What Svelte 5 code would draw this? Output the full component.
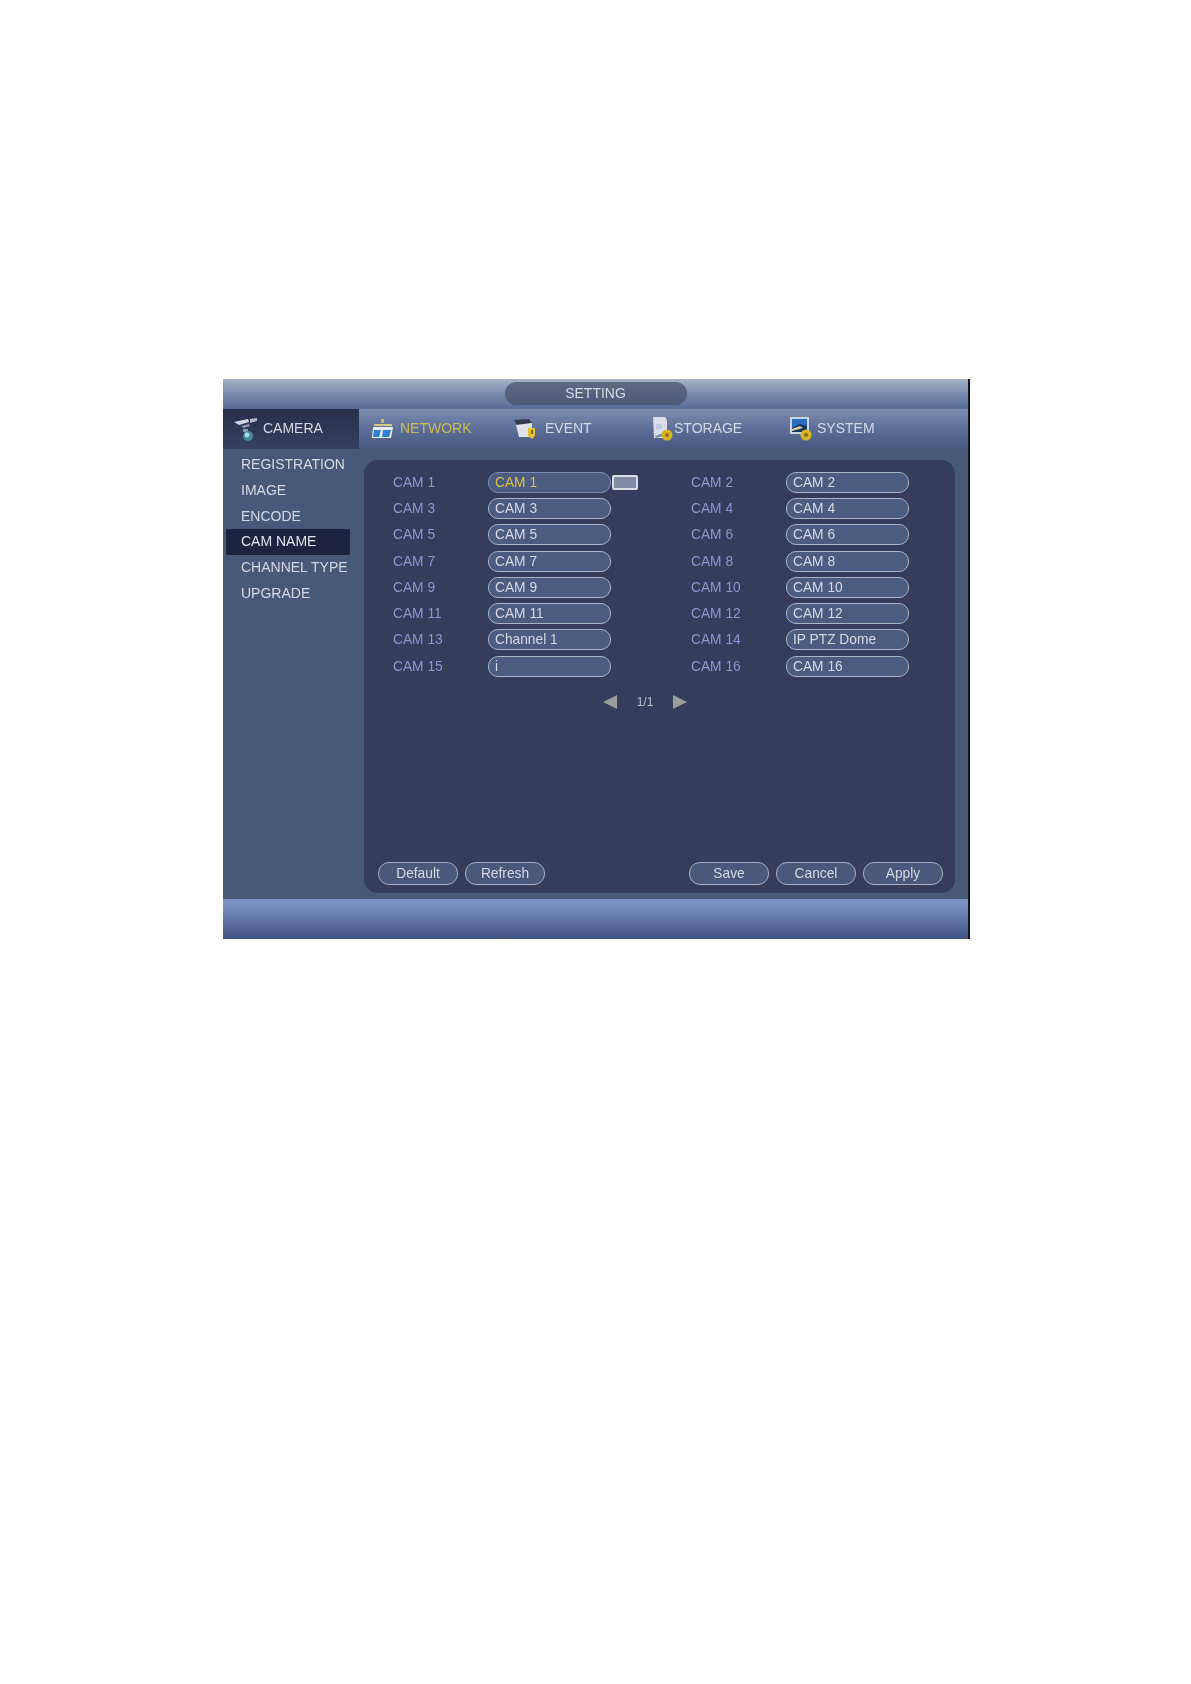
<script>
  const sideItems = ['REGISTRATION', 'IMAGE', 'ENCODE', 'CAM NAME', 'CHANNEL TYPE', 'UPGRADE'];
  const values = {
    1: 'CAM 1', 2: 'CAM 2', 3: 'CAM 3', 4: 'CAM 4', 5: 'CAM 5', 6: 'CAM 6', 7: 'CAM 7', 8: 'CAM 8',
    9: 'CAM 9', 10: 'CAM 10', 11: 'CAM 11', 12: 'CAM 12', 13: 'Channel 1', 14: 'IP PTZ Dome', 15: 'i', 16: 'CAM 16'
  };
  const channels = Object.keys(values).map(Number);
</script>

<div class="page">
  <div class="dvr">
    <header class="title-bar"><div class="title">SETTING</div></header>

    <nav class="tabs">
      <div class="tab camera">
        <svg width="26" height="26" viewBox="0 0 26 26">
          <path d="M1 6l14-3 1 3-10 3z" fill="#d5dbe6"/>
          <path d="M17 3l7-1v3l-7 2z" fill="#aeb8c8"/>
          <path d="M8 10l8-2 1 2-6 2zM10 13h5v3h-5z" fill="#8e9ab0"/>
          <circle cx="15" cy="20" r="5" fill="#3f8c9c"/>
          <circle cx="14" cy="19" r="2.4" fill="#a9dbe0"/>
        </svg>
        <span>CAMERA</span>
      </div>
      <div class="tab network">
        <svg width="24" height="24" viewBox="0 0 24 24">
          <path d="M10 2h3v4h-3z" fill="#c9b765"/>
          <path d="M3 7h18v2H3z" fill="#d7c98c"/>
          <path d="M2 10h20l-2 11H1z" fill="#e8eef5"/>
          <path d="M3 13h7l-2 7H2zM12 13h8l-2 7h-7z" fill="#2f7fd0"/>
        </svg>
        <span>NETWORK</span>
      </div>
      <div class="tab event">
        <svg width="24" height="24" viewBox="0 0 24 24">
          <path d="M1 3l15-1 3 4-15 2z" fill="#343c4c"/>
          <path d="M3 8l16-2v14H6z" fill="#dfe3ea"/>
          <path d="M15 11h7v8l-3 3-4-3z" fill="#e2c22c"/>
          <path d="M18 13h2v4h-2z" fill="#7a6a1c"/>
        </svg>
        <span>EVENT</span>
      </div>
      <div class="tab storage">
        <svg width="22" height="26" viewBox="0 0 22 26">
          <path d="M1 1h12l2 3v18H2z" fill="#d9deea"/>
          <path d="M4 8h6v5H4z" fill="#c4cbe0"/>
          <path d="M3 20l8-3 1 3-8 2z" fill="#8590a8"/>
          <circle cx="15" cy="19" r="5.5" fill="#d9b526"/>
          <circle cx="15" cy="19" r="2" fill="#8d7420"/>
        </svg>
        <span>STORAGE</span>
      </div>
      <div class="tab system">
        <svg width="26" height="26" viewBox="0 0 26 26">
          <path d="M1 1h19v17H1z" fill="#c9d4e6"/>
          <path d="M3 3h15v13H3z" fill="#2a6bc4"/>
          <path d="M3 12l8-4 7 2v6H3z" fill="#17345f"/>
          <path d="M3 13l8-3 3 2-11 3z" fill="#d9d3a0"/>
          <circle cx="17" cy="19" r="5.5" fill="#d9b526"/>
          <circle cx="17" cy="19" r="2" fill="#7d6a20"/>
        </svg>
        <span>SYSTEM</span>
      </div>
    </nav>

    <div class="body">
      <aside class="side">
        {#each sideItems as item}
          <div class="side-item" class:active={item === 'CAM NAME'}>{item}</div>
        {/each}
      </aside>

      <main class="panel">
        <div class="grid">
          {#each channels as n}
            <div class="row">
              <span class="label">CAM {n}</span>
              <div class="field" class:focus={n === 1}>{values[n]}</div>
              {#if n === 1}<div class="kbd"></div>{/if}
            </div>
          {/each}
        </div>

        <div class="pager">
          <span class="arrow left"></span>
          <span class="count">1/1</span>
          <span class="arrow right"></span>
        </div>

        <div class="actions">
          <div class="group">
            <div class="btn">Default</div>
            <div class="btn">Refresh</div>
          </div>
          <div class="group">
            <div class="btn">Save</div>
            <div class="btn">Cancel</div>
            <div class="btn">Apply</div>
          </div>
        </div>
      </main>
    </div>

    <footer class="foot"></footer>
  </div>
</div>

<style>
  :global(body) {
    margin: 0;
    background: #fff;
  }
  .page {
    padding: 379px 0 745px 223px;
    font-family: "Liberation Sans", Arial, sans-serif;
    font-size: 14px;
  }
  .dvr {
    width: 745px;
    height: 560px;
    display: flex;
    flex-direction: column;
    border-right: 2px solid #10141f;
    background: #485879;
    filter: blur(0.7px);
  }
  .title-bar {
    height: 30px;
    flex: none;
    display: flex;
    justify-content: center;
    align-items: center;
    box-sizing: border-box;
    padding: 0 0 2px 0;
    background: linear-gradient(#a8b0c4, #7d8eb0 45%, #566a96);
  }
  .title {
    width: 182px;
    height: 23px;
    line-height: 23px;
    text-align: center;
    border-radius: 12px;
    color: #d5dbe6;
    background: linear-gradient(#5f6a82, #4d5a78);
  }
  .tabs {
    height: 40px;
    flex: none;
    display: flex;
    align-items: center;
    background: linear-gradient(#7c8db0, #5d6f98 50%, #475780);
    color: #d4d9e4;
  }
  .tab {
    display: flex;
    align-items: center;
    gap: 5px;
    height: 100%;
  }
  .tab span {
    margin-bottom: 2px;
  }
  .camera {
    width: 136px;
    box-sizing: border-box;
    padding-left: 10px;
    background: linear-gradient(#262f4c, #36425f);
    gap: 4px;
  }
  .network {
    width: 154px;
    box-sizing: border-box;
    padding-left: 12px;
    color: #c9bb55;
  }
  .event {
    width: 139px;
    box-sizing: border-box;
    gap: 8px;
  }
  .storage {
    width: 137px;
    box-sizing: border-box;
    gap: 0;
  }
  .system {
    box-sizing: border-box;
    gap: 2px;
  }
  .body {
    flex: 1;
    display: flex;
    min-height: 0;
  }
  .side {
    width: 141px;
    flex: none;
    box-sizing: border-box;
    padding: 3px 14px 0 3px;
    color: #d4d9e4;
  }
  .side-item {
    height: 25.75px;
    line-height: 25.75px;
    padding-left: 15px;
    white-space: nowrap;
  }
  .side-item.active {
    background: #1c2440;
    color: #e0e4ec;
  }
  .panel {
    width: 591px;
    height: 433px;
    margin-top: 11px;
    box-sizing: border-box;
    padding: 9px 12px 0 14px;
    border-radius: 14px;
    background: #343d5b;
    display: flex;
    flex-direction: column;
    font-size: 13.75px;
  }
  .grid {
    display: grid;
    grid-template-columns: 298px 1fr;
    grid-auto-rows: 26.3px;
    padding-left: 15px;
  }
  .row {
    display: flex;
    align-items: center;
  }
  .label {
    width: 95px;
    color: #8b97d0;
    flex: none;
  }
  .field {
    width: 123px;
    height: 21px;
    line-height: 19px;
    box-sizing: border-box;
    padding-left: 6px;
    border: 1px solid #aab4c8;
    border-radius: 10px;
    background: #4c5b80;
    color: #d4d9e4;
  }
  .field.focus {
    color: #d9bf4a;
    border-color: #7f8fb8;
  }
  .kbd {
    width: 26px;
    height: 15px;
    margin-left: 1px;
    border-radius: 2px;
    background: #7f8aa4;
    border: 2px solid #d7dce6;
    box-sizing: border-box;
  }
  .pager {
    display: flex;
    justify-content: center;
    align-items: center;
    gap: 20px;
    margin-top: 16px;
    padding-right: 31px;
    color: #b9c0d2;
    font-size: 12px;
  }
  .arrow {
    width: 0;
    height: 0;
    border-top: 7px solid transparent;
    border-bottom: 7px solid transparent;
  }
  .arrow.left {
    border-right: 14px solid #9a9c9c;
  }
  .arrow.right {
    border-left: 14px solid #9a9c9c;
  }
  .actions {
    margin-top: auto;
    margin-bottom: 8px;
    display: flex;
    justify-content: space-between;
  }
  .group {
    display: flex;
    gap: 7px;
  }
  .btn {
    width: 80px;
    height: 23px;
    line-height: 21px;
    box-sizing: border-box;
    text-align: center;
    border: 1px solid #a3adc3;
    border-radius: 11px;
    background: #4a587c;
    color: #d4d9e4;
  }
  .foot {
    height: 40px;
    flex: none;
    margin-top: 5px;
    background: linear-gradient(#7d95c4, #6a80b0 40%, #3f5080);
  }
</style>
